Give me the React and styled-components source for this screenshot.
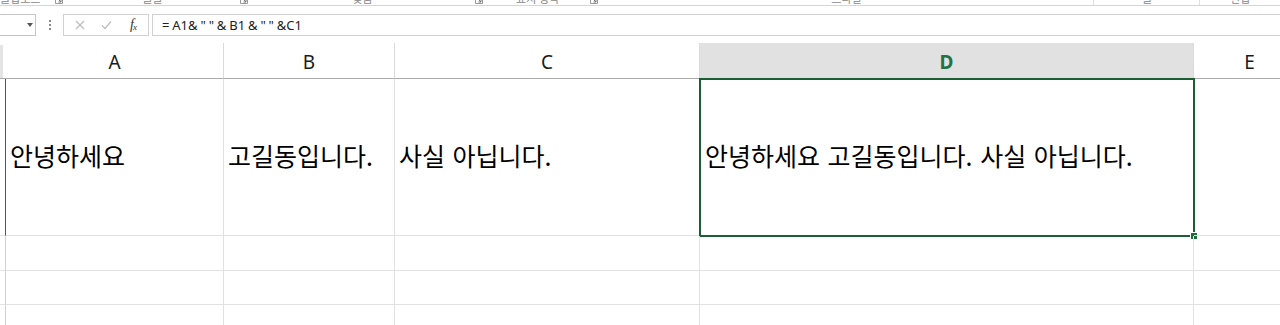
import React from "react";
import styled, { createGlobalStyle } from "styled-components";

const Global = createGlobalStyle`
  html, body { margin: 0; padding: 0; background: #fff; }
  body { font-family: "Noto Sans", "Noto Sans CJK KR", sans-serif; }
`;

const Page = styled.div`
  width: 1280px;
  height: 325px;
  overflow: hidden;
  background: #fff;
`;

const Ribbon = styled.div`
  display: flex;
  height: 5px;
  border-bottom: 1px solid #d6d6d6;
  overflow: hidden;
`;

const Group = styled.div`
  display: flex;
  width: ${(p) => p.$w}px;
  flex: none;
  border-right: ${(p) => (p.$sep ? "1px solid #e0e0e0" : "none")};
  box-sizing: border-box;
`;

const GroupLabel = styled.div`
  flex: 1;
  text-align: ${(p) => p.$align || "center"};
  padding-left: ${(p) => p.$pad || 0}px;
  margin-top: -9px;
  font-family: "Noto Sans CJK KR", sans-serif;
  font-size: 11px;
  line-height: 14px;
  color: #888;
  white-space: nowrap;
`;

const Launcher = styled.svg`
  flex: none;
  width: 8px;
  height: 8px;
  margin-top: -4px;
  margin-right: 2px;
`;

const LauncherIcon = () => (
  <Launcher viewBox="0 0 8 8">
    <path d="M0.5 0.5 H7.5 V7.5 H0.5 Z" fill="none" stroke="#999" strokeWidth="1" />
    <path d="M3 3 L6 6 M6 3.5 V6 H3.5" fill="none" stroke="#777" strokeWidth="1" />
  </Launcher>
);

const FormulaRow = styled.div`
  display: flex;
  align-items: stretch;
  height: 22px;
  margin-top: 8px;
  box-sizing: border-box;
`;

const NameBox = styled.div`
  width: 36px;
  flex: none;
  border: 1px solid #c6c6c6;
  border-left: none;
  box-sizing: border-box;
  display: flex;
  align-items: center;
  justify-content: flex-end;
  padding-right: 2px;
`;

const Caret = styled.div`
  width: 0;
  height: 0;
  border-left: 3px solid transparent;
  border-right: 3px solid transparent;
  border-top: 4px solid #555;
`;

const Dots = styled.div`
  width: 27px;
  flex: none;
  display: flex;
  flex-direction: column;
  align-items: center;
  justify-content: center;
  gap: 2px;
  span {
    width: 2px;
    height: 2px;
    background: #8a8a8a;
    display: block;
  }
`;

const FuncBox = styled.div`
  width: 86px;
  flex: none;
  border: 1px solid #d2d2d2;
  box-sizing: border-box;
  display: flex;
  align-items: center;
  padding-left: 2px;
`;

const FuncIcon = styled.div`
  width: ${(p) => p.$w}px;
  flex: none;
  display: flex;
  align-items: center;
  justify-content: center;
`;

const Fx = styled.span`
  font-family: "Liberation Serif", serif;
  font-style: italic;
  font-size: 14px;
  color: #333;
  letter-spacing: -1px;
  sub {
    font-size: 9px;
    vertical-align: -1px;
  }
`;

const FormulaInput = styled.div`
  flex: 1;
  margin-left: 3px;
  border: 1px solid #d2d2d2;
  border-right: none;
  box-sizing: border-box;
  padding-left: 9px;
  display: flex;
  align-items: center;
  font-family: "Noto Sans", sans-serif;
  font-size: 13px;
  word-spacing: -0.5px;
  color: #222;
  white-space: pre;
`;

const Grid = styled.div`
  display: grid;
  grid-template-columns: 6px 218px 171px 305px 494px 112px;
  grid-template-rows: 36px 157px 35px 34px 40px;
  margin-top: 7px;
`;

const Corner = styled.div`
  background: linear-gradient(to right, #e4e4e4 0 3px, #fff 3px);
  border-bottom: 1px solid #ababab;
  margin-top: 2px;
`;

const ColHead = styled.div`
  box-sizing: border-box;
  border-right: 1px solid #dadada;
  border-bottom: 1px solid #ababab;
  background: ${(p) => (p.$active ? "#e1e1e1" : "#fff")};
  display: flex;
  align-items: center;
  justify-content: center;
  padding-top: 2px;
  font-family: "Noto Sans", sans-serif;
  font-size: 19px;
  font-weight: ${(p) => (p.$active ? 700 : 400)};
  color: ${(p) => (p.$active ? "#217346" : "#1a1a1a")};
`;

const RowHead = styled.div`
  box-sizing: border-box;
  border-right: 1px solid ${(p) => (p.$active ? "#217346" : "#d2d2d2")};
  border-bottom: 1px solid #e2e2e2;
`;

const Cell = styled.div`
  position: relative;
  box-sizing: border-box;
  border-right: 1px solid #e1e1e1;
  border-bottom: 1px solid #e1e1e1;
  display: flex;
  align-items: center;
  padding-left: ${(p) => p.$pad ?? 4}px;
  padding-bottom: 4px;
  font-family: "Noto Sans CJK KR", "Noto Sans", sans-serif;
  font-size: 25px;
  word-spacing: 2px;
  color: #000;
  white-space: nowrap;
`;

const Selection = styled.div`
  position: absolute;
  left: -1px;
  top: -1px;
  right: -2px;
  bottom: -2px;
  border: 2px solid #1a5e33;
  pointer-events: none;
`;

const Handle = styled.div`
  position: absolute;
  right: -5px;
  bottom: -5px;
  width: 6px;
  height: 6px;
  background: #1f6b3c;
  border: 1px solid #fff;
`;

const cols = ["A", "B", "C", "D", "E"];
const row1 = [
  "안녕하세요",
  "고길동입니다.",
  "사실 아닙니다.",
  "안녕하세요 고길동입니다. 사실 아닙니다.",
  "",
];

const groups = [
  { w: 65, label: "클립보드", align: "left", pad: 0 },
  { w: 185, label: "글꼴" },
  { w: 235, label: "맞춤" },
  { w: 115, label: "표시 형식" },
  { w: 494, label: "스타일", noIcon: true, sep: true },
  { w: 106, label: "셀", noIcon: true, sep: true },
  { w: 80, label: "편집", noIcon: true },
];

export default function App() {
  return (
    <Page>
      <Global />
      <Ribbon>
        {groups.map((g, i) => (
          <Group key={i} $w={g.w} $sep={g.sep}>
            <GroupLabel $align={g.align} $pad={g.pad}>
              {g.label}
            </GroupLabel>
            {!g.noIcon && <LauncherIcon />}
          </Group>
        ))}
      </Ribbon>
      <FormulaRow>
        <NameBox>
          <Caret />
        </NameBox>
        <Dots>
          <span />
          <span />
          <span />
        </Dots>
        <FuncBox>
          <FuncIcon $w={27}>
            <svg width="10" height="10" viewBox="0 0 10 10">
              <path d="M1 1 L9 9 M9 1 L1 9" stroke="#bdbdbd" strokeWidth="1.2" fill="none" />
            </svg>
          </FuncIcon>
          <FuncIcon $w={27}>
            <svg width="11" height="10" viewBox="0 0 11 10">
              <path d="M1 5.5 L4 8.5 L10 1.5" stroke="#bdbdbd" strokeWidth="1.2" fill="none" />
            </svg>
          </FuncIcon>
          <FuncIcon $w={26}>
            <Fx>
              f<sub>x</sub>
            </Fx>
          </FuncIcon>
        </FuncBox>
        <FormulaInput>{'= A1& " " & B1 & " " &C1'}</FormulaInput>
      </FormulaRow>
      <Grid>
        <Corner />
        {cols.map((c) => (
          <ColHead key={c} $active={c === "D"}>
            {c}
          </ColHead>
        ))}
        <RowHead $active />
        {row1.map((t, i) => (
          <Cell key={i} $pad={i === 3 ? 5 : 4}>
            {t}
            {i === 3 && (
              <Selection>
                <Handle />
              </Selection>
            )}
          </Cell>
        ))}
        {[0, 1, 2].map((r) => (
          <React.Fragment key={r}>
            <RowHead />
            {cols.map((c) => (
              <Cell key={c} />
            ))}
          </React.Fragment>
        ))}
      </Grid>
    </Page>
  );
}
